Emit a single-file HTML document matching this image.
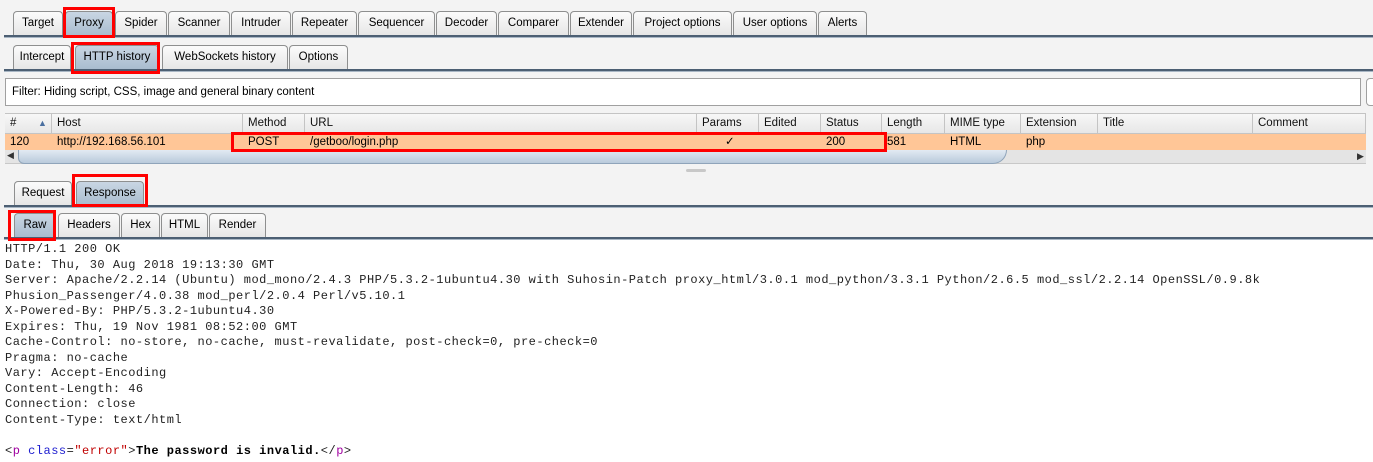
<!DOCTYPE html>
<html><head><meta charset="utf-8"><style>
*{margin:0;padding:0;box-sizing:border-box}
body{width:1373px;height:462px;background:#fff;font-family:"Liberation Sans",sans-serif;font-size:12px;color:#000;position:relative;overflow:hidden}
.abs{position:absolute}
.tab{position:absolute;height:24px;border:1px solid #8e8f8f;border-bottom:none;border-radius:4px 4px 0 0;background:linear-gradient(#fbfbfb,#e6e6e6);text-align:center;line-height:23px;font-size:11.5px;color:#000}
.sel{background:linear-gradient(#c9d6e3,#a9bccf)}
.bar{position:absolute;left:4px;right:0;height:3px;background:#4c5f73;border-bottom:1px solid #a8b6c4}
.red{position:absolute;border:3px solid #f00}
.th{position:absolute;top:114px;height:19px;border-right:1px solid #c4c4c4;line-height:19px;padding-left:5px;font-size:11.5px;color:#111}
.td{position:absolute;top:134px;height:16px;line-height:17px;padding-left:5px;font-size:11.5px}
pre{position:absolute;left:5px;top:242px;font-family:"Liberation Mono",monospace;font-size:12px;letter-spacing:.5px;line-height:15.5px;color:#222}
</style></head><body>
<div class="abs" style="left:0;top:0;width:1373px;height:170px;background:#f3f3f3"></div>
<div class="abs" style="left:0;top:170px;width:1373px;height:70px;background:#f3f3f3"></div>

<div class="tab" style="left:13px;top:11px;width:50px">Target</div>
<div class="tab sel" style="left:65px;top:11px;width:48px">Proxy</div>
<div class="tab" style="left:115px;top:11px;width:52px">Spider</div>
<div class="tab" style="left:168px;top:11px;width:62px">Scanner</div>
<div class="tab" style="left:231px;top:11px;width:60px">Intruder</div>
<div class="tab" style="left:292px;top:11px;width:65px">Repeater</div>
<div class="tab" style="left:358px;top:11px;width:77px">Sequencer</div>
<div class="tab" style="left:436px;top:11px;width:61px">Decoder</div>
<div class="tab" style="left:498px;top:11px;width:71px">Comparer</div>
<div class="tab" style="left:570px;top:11px;width:62px">Extender</div>
<div class="tab" style="left:633px;top:11px;width:99px">Project options</div>
<div class="tab" style="left:733px;top:11px;width:84px">User options</div>
<div class="tab" style="left:818px;top:11px;width:49px">Alerts</div>
<div class="bar" style="top:35px"></div>

<div class="tab" style="left:13px;top:45px;width:58px">Intercept</div>
<div class="tab sel" style="left:75px;top:45px;width:84px">HTTP history</div>
<div class="tab" style="left:162px;top:45px;width:126px">WebSockets history</div>
<div class="tab" style="left:289px;top:45px;width:59px">Options</div>
<div class="bar" style="top:69px"></div>

<div class="abs" style="left:5px;top:78px;width:1356px;height:28px;background:#fff;border:1px solid #a0a0a0;line-height:27px;padding-left:6px;font-size:11.5px">Filter: Hiding script, CSS, image and general binary content</div>
<div class="abs" style="left:1366px;top:78px;width:12px;height:28px;background:#fff;border:1px solid #a0a0a0;border-radius:4px"></div>

<div class="abs" style="left:5px;top:113px;width:1361px;height:21px;background:linear-gradient(#f7f7f7,#e7e7e7);border-top:1px solid #c4c4c4;border-bottom:1px solid #c4c4c4"></div>
<div class="th" style="left:5px;width:47px">#<span style="position:absolute;left:33px;color:#4a6fa0;font-size:9px">▲</span></div>
<div class="th" style="left:52px;width:191px">Host</div>
<div class="th" style="left:243px;width:62px">Method</div>
<div class="th" style="left:305px;width:392px">URL</div>
<div class="th" style="left:697px;width:62px">Params</div>
<div class="th" style="left:759px;width:62px">Edited</div>
<div class="th" style="left:821px;width:61px">Status</div>
<div class="th" style="left:882px;width:63px">Length</div>
<div class="th" style="left:945px;width:76px">MIME type</div>
<div class="th" style="left:1021px;width:77px">Extension</div>
<div class="th" style="left:1098px;width:155px">Title</div>
<div class="th" style="left:1253px;width:113px">Comment</div>

<div class="abs" style="left:5px;top:134px;width:1361px;height:16px;background:#ffc697"></div>
<div class="td" style="left:5px">120</div>
<div class="td" style="left:52px">http://192.168.56.101</div>
<div class="td" style="left:243px">POST</div>
<div class="td" style="left:305px">/getboo/login.php</div>
<div class="td" style="left:720px">✓</div>
<div class="td" style="left:821px">200</div>
<div class="td" style="left:882px">581</div>
<div class="td" style="left:945px">HTML</div>
<div class="td" style="left:1021px">php</div>

<div class="abs" style="left:5px;top:150px;width:1361px;height:14px;background:#e4e4e4;border-bottom:1px solid #c8c8c8"></div>
<div class="abs" style="left:18px;top:150px;width:989px;height:14px;background:linear-gradient(#e2eaf3,#b9cadb);border:1px solid #8fa4ba;border-top:none;border-radius:0 0 14px 6px"></div>
<div class="abs" style="left:7px;top:150px;font-size:9px;color:#333">◀</div>
<div class="abs" style="left:1357px;top:151px;font-size:9px;color:#333">▶</div>
<div class="abs" style="left:686px;top:169px;width:20px;height:3px;background:#c8c8c8;border-radius:2px"></div>

<div class="tab" style="left:14px;top:181px;width:58px">Request</div>
<div class="tab sel" style="left:76px;top:181px;width:68px">Response</div>
<div class="bar" style="top:205px"></div>

<div class="tab sel" style="left:14px;top:213px;width:42px">Raw</div>
<div class="tab" style="left:58px;top:213px;width:62px">Headers</div>
<div class="tab" style="left:121px;top:213px;width:39px">Hex</div>
<div class="tab" style="left:161px;top:213px;width:47px">HTML</div>
<div class="tab" style="left:209px;top:213px;width:57px">Render</div>
<div class="bar" style="top:237px"></div>

<pre>HTTP/1.1 200 OK
Date: Thu, 30 Aug 2018 19:13:30 GMT
Server: Apache/2.2.14 (Ubuntu) mod_mono/2.4.3 PHP/5.3.2-1ubuntu4.30 with Suhosin-Patch proxy_html/3.0.1 mod_python/3.3.1 Python/2.6.5 mod_ssl/2.2.14 OpenSSL/0.9.8k
Phusion_Passenger/4.0.38 mod_perl/2.0.4 Perl/v5.10.1
X-Powered-By: PHP/5.3.2-1ubuntu4.30
Expires: Thu, 19 Nov 1981 08:52:00 GMT
Cache-Control: no-store, no-cache, must-revalidate, post-check=0, pre-check=0
Pragma: no-cache
Vary: Accept-Encoding
Content-Length: 46
Connection: close
Content-Type: text/html

&lt;<span style="color:#a000a0">p</span> <span style="color:#2020d0">class</span>=<span style="color:#c00000">"error"</span>&gt;<b style="color:#000">The password is invalid.</b>&lt;/<span style="color:#a000a0">p</span>&gt;</pre>

<div class="red" style="left:63px;top:7px;width:52px;height:31px"></div>
<div class="red" style="left:71px;top:42px;width:89px;height:32px"></div>
<div class="red" style="left:231px;top:132px;width:656px;height:20px"></div>
<div class="red" style="left:72px;top:174px;width:76px;height:33px"></div>
<div class="red" style="left:8px;top:210px;width:48px;height:31px"></div>
</body></html>
